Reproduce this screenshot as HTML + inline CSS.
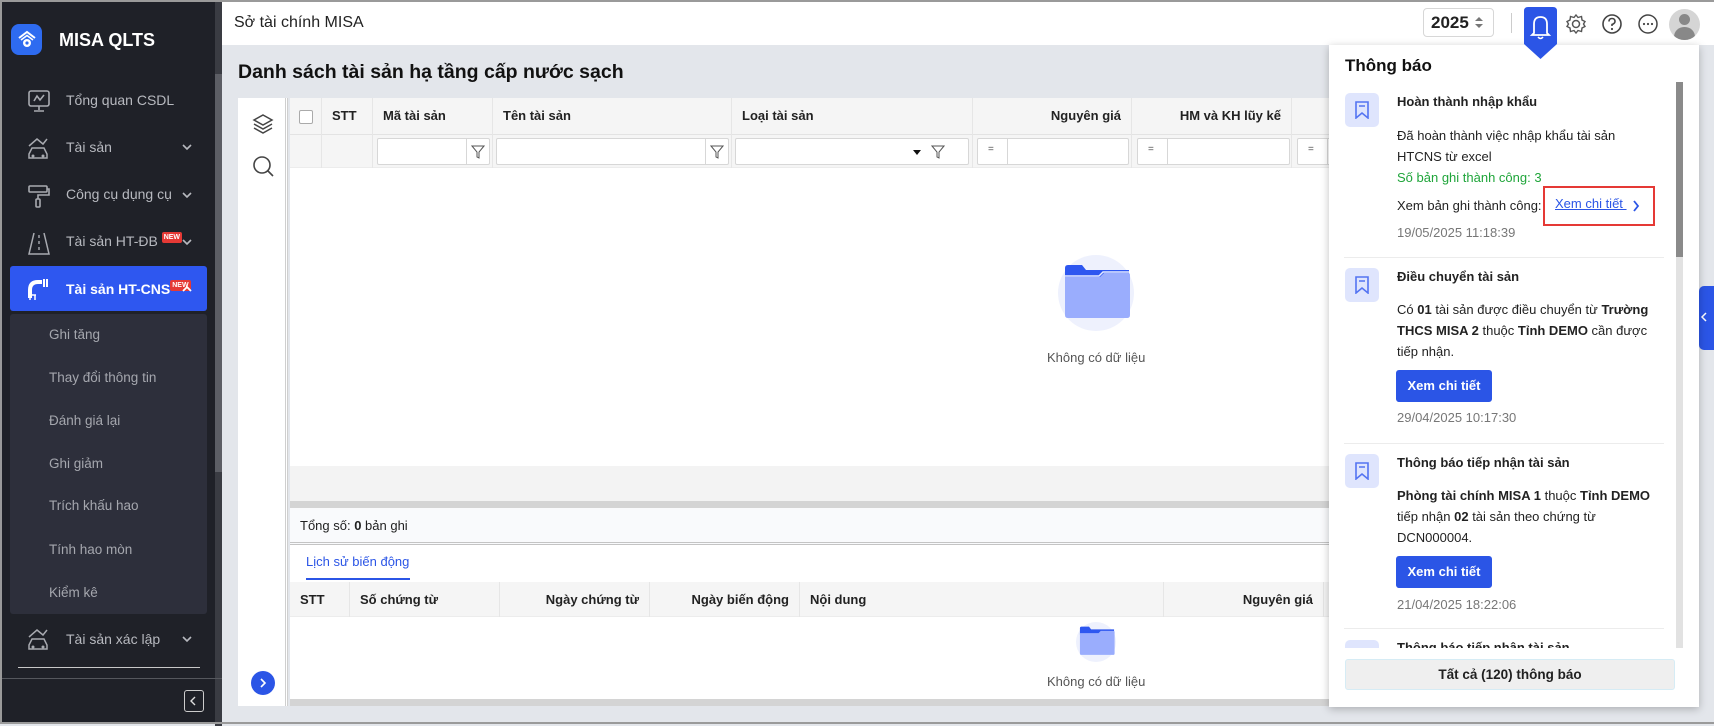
<!DOCTYPE html>
<html><head><meta charset="utf-8"><style>
*{box-sizing:border-box;margin:0;padding:0}
body{width:1714px;height:724px;overflow:hidden;position:relative;font-family:"Liberation Sans",sans-serif;font-size:13px;color:#212121;background:#e3e6eb}
.a{position:absolute}
.sb{left:0;top:0;width:222px;height:724px;background:#1f2128;border-top:2px solid #9a9a9a;border-left:2px solid #9a9a9a}
.mi{position:absolute;left:64px;color:#b7b9bf;font-size:14px;line-height:18px}
.ic{position:absolute;left:24px;width:26px;height:26px}
.chev{position:absolute;left:180px;width:10px;height:10px}
.sub{position:absolute;left:47px;color:#a5a7ae;font-size:13.5px;line-height:18px}
.new{display:inline-block;background:#e53935;color:#fff;font-size:7px;font-weight:bold;padding:1px 2px;border-radius:2px;vertical-align:top;line-height:9px}
.hd{left:222px;top:0;width:1492px;height:45px;background:#fff;border-top:2px solid #9a9a9a}
.th{position:absolute;top:0;height:36px;line-height:36px;font-weight:bold;font-size:13px;border-right:1px solid #e6e6e6;padding:0 10px;color:#222}
.fin{position:absolute;top:4px;height:27px;border:1px solid #d7d7d7;background:#fff;border-radius:2px}
.nt{position:absolute;left:1397px;font-size:13px;line-height:21px;color:#222;width:260px}
.ib{position:absolute;left:1345px;width:34px;height:34px;background:#dfe5fd;border-radius:5px}
.btn{position:absolute;left:1396px;width:96px;height:32px;background:#2b55e6;color:#fff;font-weight:bold;border-radius:3px;text-align:center;line-height:32px;font-size:13px}
.dt{position:absolute;left:1397px;color:#777;font-size:13px}
.sep{position:absolute;left:1344px;width:320px;height:1px;background:#ececec}
</style></head><body>

<!-- sidebar -->
<div class="a sb">
  <div class="a" style="left:9px;top:22px;width:31px;height:31px;background:#2e6bf0;border-radius:8px"></div>
  <svg class="a" style="left:14px;top:26px" width="22" height="22" viewBox="0 0 22 22"><path d="M3 10 L11 4 L19 10" stroke="#fff" stroke-width="2" fill="none"/><path d="M5 12 L11 7.5 L17 12" stroke="#fff" stroke-width="1.6" fill="none"/><circle cx="11" cy="15" r="4" fill="#fff"/><circle cx="11" cy="15" r="1.6" fill="#2e6bf0"/></svg>
  <div class="a" style="left:57px;top:28px;color:#fff;font-weight:bold;font-size:18px">MISA QLTS</div>
  <div class="a" style="left:213px;top:0;width:7px;height:724px;background:#3a3c43"></div>
  <div class="a" style="left:213px;top:72px;width:7px;height:398px;background:#5c5e65"></div>

  <svg class="ic" style="top:86px" viewBox="0 0 26 26"><rect x="3" y="3" width="20" height="15" rx="2" fill="none" stroke="#a8aab0" stroke-width="1.6"/><path d="M8 13 L11 8 L14 12 L18 7" stroke="#a8aab0" stroke-width="1.6" fill="none"/><path d="M13 18v4M8 23h10" stroke="#a8aab0" stroke-width="1.6"/></svg>
  <div class="mi" style="top:89px">Tổng quan CSDL</div>
  <svg class="ic" style="top:134px" viewBox="0 0 26 26"><path d="M3 10 L11 3 L17 8 L21 3" stroke="#a8aab0" stroke-width="1.5" fill="none"/><path d="M3 18 L6 12 H18 L21 18 V22 H3Z" stroke="#a8aab0" stroke-width="1.5" fill="none"/><circle cx="7" cy="20" r="1.5" fill="#a8aab0"/><circle cx="17" cy="20" r="1.5" fill="#a8aab0"/></svg>
  <div class="mi" style="top:136px">Tài sản</div>
  <svg class="chev" style="top:140px" viewBox="0 0 10 10"><path d="M1 3 L5 7 L9 3" stroke="#b7b9bf" stroke-width="1.6" fill="none"/></svg>
  <svg class="ic" style="top:181px" viewBox="0 0 26 26"><rect x="3" y="3" width="18" height="6" rx="1" fill="none" stroke="#a8aab0" stroke-width="1.6"/><path d="M21 6h2v6H12v4" stroke="#a8aab0" stroke-width="1.6" fill="none"/><rect x="10" y="16" width="4" height="8" rx="1" fill="none" stroke="#a8aab0" stroke-width="1.6"/></svg>
  <div class="mi" style="top:183px">Công cụ dụng cụ</div>
  <svg class="chev" style="top:188px" viewBox="0 0 10 10"><path d="M1 3 L5 7 L9 3" stroke="#b7b9bf" stroke-width="1.6" fill="none"/></svg>
  <svg class="ic" style="top:228px" viewBox="0 0 26 26"><path d="M8 3 L3 24 H23 L18 3" stroke="#a8aab0" stroke-width="1.5" fill="none"/><path d="M13 5v3M13 11v3M13 17v3" stroke="#a8aab0" stroke-width="1.4"/></svg>
  <div class="mi" style="top:230px">Tài sản HT-ĐB <span class="new">NEW</span></div>
  <svg class="chev" style="top:235px" viewBox="0 0 10 10"><path d="M1 3 L5 7 L9 3" stroke="#b7b9bf" stroke-width="1.6" fill="none"/></svg>

  <div class="a" style="left:8px;top:264px;width:197px;height:45px;background:#2e57f0;border-radius:3px"></div>
  <svg class="ic" style="top:274px" viewBox="0 0 26 26"><path d="M4 22 V14 Q4 6 12 6 H16" stroke="#fff" stroke-width="4" fill="none"/><path d="M18 3v8M21 3v8" stroke="#fff" stroke-width="2"/><path d="M3 19h7M4 19v5M9 19v5" stroke="#fff" stroke-width="1.5"/></svg>
  <div class="mi" style="top:278px;color:#fff;font-weight:bold;font-size:14px">Tài sản HT-CNS<span class="new">NEW</span></div>
  <svg class="chev" style="top:282px" viewBox="0 0 10 10"><path d="M1 7 L5 3 L9 7" stroke="#fff" stroke-width="1.8" fill="none"/></svg>

  <div class="a" style="left:8px;top:312px;width:197px;height:300px;background:#2d2f3b;border-radius:3px"></div>
  <div class="sub" style="top:324px">Ghi tăng</div>
  <div class="sub" style="top:367px">Thay đổi thông tin</div>
  <div class="sub" style="top:410px">Đánh giá lại</div>
  <div class="sub" style="top:453px">Ghi giảm</div>
  <div class="sub" style="top:495px">Trích khấu hao</div>
  <div class="sub" style="top:539px">Tính hao mòn</div>
  <div class="sub" style="top:582px">Kiểm kê</div>

  <svg class="ic" style="top:625px" viewBox="0 0 26 26"><path d="M3 10 L11 3 L17 8 L21 3" stroke="#a8aab0" stroke-width="1.5" fill="none"/><path d="M3 18 L6 12 H18 L21 18 V22 H3Z" stroke="#a8aab0" stroke-width="1.5" fill="none"/><circle cx="7" cy="20" r="1.5" fill="#a8aab0"/><circle cx="17" cy="20" r="1.5" fill="#a8aab0"/></svg>
  <div class="mi" style="top:628px">Tài sản xác lập</div>
  <svg class="chev" style="top:632px" viewBox="0 0 10 10"><path d="M1 3 L5 7 L9 3" stroke="#b7b9bf" stroke-width="1.6" fill="none"/></svg>
  <div class="a" style="left:16px;top:665px;width:182px;height:1px;background:#c8c8c8"></div>
  <div class="a" style="left:0;top:676px;width:220px;height:1px;background:#55575d"></div>
  <div class="a" style="left:182px;top:688px;width:20px;height:22px;border:1.5px solid #ccc;border-radius:3px"></div>
  <svg class="a" style="left:187px;top:694px" width="10" height="10" viewBox="0 0 10 10"><path d="M6 1 L2 5 L6 9" stroke="#ddd" stroke-width="1.4" fill="none"/></svg>
</div>

<!-- header -->
<div class="a hd">
  <div class="a" style="left:12px;top:12px;font-size:16px;color:#222">Sở tài chính MISA</div>
</div>
<div class="a" style="left:0;top:722px;width:1714px;height:2px;background:#9a9a9a"></div>

<!-- main -->
<div class="a" style="left:238px;top:61px;font-size:19.5px;font-weight:bold;color:#111">Danh sách tài sản hạ tầng cấp nước sạch</div>
<div class="a" style="left:238px;top:98px;width:50px;height:608px;background:#fff;border-right:3px double #cfcfcf"></div>
<svg class="a" style="left:251px;top:112px" width="24" height="24" viewBox="0 0 24 24"><path d="M12 3 L21 8 L12 13 L3 8Z" fill="none" stroke="#444" stroke-width="1.5"/><path d="M3 12 L12 17 L21 12M3 16 L12 21 L21 16" fill="none" stroke="#444" stroke-width="1.5"/></svg>
<svg class="a" style="left:251px;top:154px" width="24" height="24" viewBox="0 0 24 24"><circle cx="11" cy="11" r="8" fill="none" stroke="#444" stroke-width="1.6"/><path d="M17 17 L22 22" stroke="#444" stroke-width="1.6"/></svg>
<div class="a" style="left:251px;top:671px;width:24px;height:24px;border-radius:50%;background:#2b55e6"></div>
<svg class="a" style="left:258px;top:678px" width="10" height="10" viewBox="0 0 10 10"><path d="M3 1 L7 5 L3 9" stroke="#fff" stroke-width="1.6" fill="none"/></svg>

<div class="a" style="left:290px;top:98px;width:1408px;height:608px;background:#fff;overflow:hidden">
  <div class="a" style="left:0;top:0;width:1408px;height:70px;background:#f5f5f5;border-bottom:1px solid #ececec"></div>
  <div class="a" style="left:0;top:36px;width:1408px;height:1px;background:#e3e3e3"></div>
  <div class="th" style="left:0;width:32px;height:70px"></div>
  <div class="a" style="left:9px;top:12px;width:14px;height:14px;border:1px solid #aaa;border-radius:2px;background:#fff"></div>
  <div class="th" style="left:32px;width:51px;height:70px">STT</div>
  <div class="th" style="left:83px;width:120px;height:70px">Mã tài sản</div>
  <div class="th" style="left:203px;width:239px;height:70px">Tên tài sản</div>
  <div class="th" style="left:442px;width:241px;height:70px">Loại tài sản</div>
  <div class="th" style="left:683px;width:159px;height:70px;text-align:right">Nguyên giá</div>
  <div class="th" style="left:842px;width:160px;height:70px;text-align:right">HM và KH lũy kế</div>
  <div class="th" style="left:1002px;width:406px;height:70px"></div>
  <div class="a" style="top:36px;left:0;width:1408px;height:34px">
    <div class="fin" style="left:87px;width:113px"></div><div class="a" style="left:176px;top:4px;width:1px;height:27px;background:#d7d7d7"></div>
    <svg class="a" style="left:181px;top:11px" width="14" height="14" viewBox="0 0 14 14"><path d="M1 1 H13 L8 7 V13 L6 12 V7Z" fill="none" stroke="#555" stroke-width="1"/></svg>
    <div class="fin" style="left:206px;width:233px"></div><div class="a" style="left:415px;top:4px;width:1px;height:27px;background:#d7d7d7"></div>
    <svg class="a" style="left:420px;top:11px" width="14" height="14" viewBox="0 0 14 14"><path d="M1 1 H13 L8 7 V13 L6 12 V7Z" fill="none" stroke="#555" stroke-width="1"/></svg>
    <div class="fin" style="left:445px;width:234px"></div>
    <svg class="a" style="left:623px;top:16px" width="8" height="5" viewBox="0 0 8 5"><path d="M0 0 H8 L4 5Z" fill="#111"/></svg>
    <svg class="a" style="left:641px;top:11px" width="14" height="14" viewBox="0 0 14 14"><path d="M1 1 H13 L8 7 V13 L6 12 V7Z" fill="none" stroke="#555" stroke-width="1"/></svg>
    <div class="fin" style="left:687px;width:152px"></div><div class="a" style="left:717px;top:4px;width:1px;height:27px;background:#d7d7d7"></div><div class="a" style="left:698px;top:10px;font-size:10px;color:#555">=</div>
    <div class="fin" style="left:847px;width:153px"></div><div class="a" style="left:877px;top:4px;width:1px;height:27px;background:#d7d7d7"></div><div class="a" style="left:858px;top:10px;font-size:10px;color:#555">=</div>
    <div class="fin" style="left:1007px;width:160px"></div><div class="a" style="left:1037px;top:4px;width:1px;height:27px;background:#d7d7d7"></div><div class="a" style="left:1018px;top:10px;font-size:10px;color:#555">=</div>
  </div>
  <div class="a" style="left:768px;top:157px;width:76px;height:76px;border-radius:50%;background:#eef1fd"></div>
  <svg class="a" style="left:772px;top:162px" width="70" height="60" viewBox="0 0 70 60"><path d="M3 8 Q3 5 6 5 H20 L24 10 H67 V20 H3Z" fill="#2e57f0"/><path d="M3 17 H38 L42 13 H66 Q68 13 68 15 V55 Q68 58 65 58 H6 Q3 58 3 55Z" fill="#9aadfd"/><path d="M3 16 H37 L41 12 H67" stroke="#e6ebff" stroke-width="1.5" fill="none"/></svg>
  <div class="a" style="left:757px;top:252px;color:#555;font-size:13px">Không có dữ liệu</div>

  <div class="a" style="left:0;top:368px;width:1408px;height:35px;background:#f3f3f3"></div>
  <div class="a" style="left:0;top:403px;width:1408px;height:7px;background:#d4d4d4"></div>
  <div class="a" style="left:0;top:410px;width:1408px;height:37px;background:#f9fafc;border-bottom:3px double #c4c4c4"></div>
  <div class="a" style="left:10px;top:420px">Tổng số: <b>0</b> bản ghi</div>
  <div class="a" style="left:16px;top:456px;color:#2b55e6;font-size:13px">Lịch sử biến động</div>
  <div class="a" style="left:16px;top:480px;width:104px;height:2px;background:#2b55e6"></div>
  <div class="a" style="left:0;top:484px;width:1408px;height:35px;background:#f5f5f5;border-bottom:1px solid #ececec"></div>
  <div class="th" style="top:484px;left:0;width:60px;height:35px;line-height:35px">STT</div>
  <div class="th" style="top:484px;left:60px;width:150px;height:35px;line-height:35px">Số chứng từ</div>
  <div class="th" style="top:484px;left:210px;width:150px;height:35px;line-height:35px;text-align:right">Ngày chứng từ</div>
  <div class="th" style="top:484px;left:360px;width:150px;height:35px;line-height:35px;text-align:right">Ngày biến động</div>
  <div class="th" style="top:484px;left:510px;width:364px;height:35px;line-height:35px">Nội dung</div>
  <div class="th" style="top:484px;left:874px;width:160px;height:35px;line-height:35px;text-align:right">Nguyên giá</div>
  <div class="a" style="left:786px;top:524px;width:40px;height:40px;border-radius:50%;background:#eef1fd"></div>
  <svg class="a" style="left:788px;top:526px" width="38" height="32" viewBox="0 0 70 60"><path d="M3 8 Q3 5 6 5 H20 L24 10 H67 V20 H3Z" fill="#2e57f0"/><path d="M3 17 H38 L42 13 H66 Q68 13 68 15 V55 Q68 58 65 58 H6 Q3 58 3 55Z" fill="#9aadfd"/></svg>
  <div class="a" style="left:757px;top:576px;color:#555;font-size:13px">Không có dữ liệu</div>
  <div class="a" style="left:0;top:601px;width:1408px;height:7px;background:#d4d4d4"></div>
</div>

<!-- header right -->
<div class="a" style="left:1423px;top:8px;width:71px;height:29px;border:1px solid #d7d7d7;border-radius:4px;background:#fff"></div>
<div class="a" style="left:1431px;top:13px;font-weight:bold;font-size:17px">2025</div>
<svg class="a" style="left:1474px;top:15px" width="10" height="15" viewBox="0 0 10 15"><path d="M1 6 L5 2 L9 6Z M1 9 L5 13 L9 9Z" fill="#777"/></svg>
<div class="a" style="left:1511px;top:13px;width:1px;height:20px;background:#ccc"></div>
<svg class="a" style="left:1565px;top:13px" width="22" height="22" viewBox="0 0 22 22"><circle cx="11" cy="11" r="3.5" fill="none" stroke="#555" stroke-width="1.5"/><path d="M11 2 L13 4.5 L16.5 3.5 L17 7 L20 8.5 L18.5 11 L20 13.5 L17 15 L16.5 18.5 L13 17.5 L11 20 L9 17.5 L5.5 18.5 L5 15 L2 13.5 L3.5 11 L2 8.5 L5 7 L5.5 3.5 L9 4.5Z" fill="none" stroke="#555" stroke-width="1.4"/></svg>
<svg class="a" style="left:1601px;top:13px" width="22" height="22" viewBox="0 0 22 22"><circle cx="11" cy="11" r="9" fill="none" stroke="#444" stroke-width="1.6"/><path d="M8 8.5 Q8 5.5 11 5.5 Q14 5.5 14 8.5 Q14 10.5 11 11.5 V13" fill="none" stroke="#444" stroke-width="1.6"/><circle cx="11" cy="16" r="1.1" fill="#444"/></svg>
<svg class="a" style="left:1637px;top:13px" width="22" height="22" viewBox="0 0 22 22"><circle cx="11" cy="11" r="9" fill="none" stroke="#444" stroke-width="1.5"/><circle cx="7" cy="11" r="1.1" fill="#444"/><circle cx="11" cy="11" r="1.1" fill="#444"/><circle cx="15" cy="11" r="1.1" fill="#444"/></svg>
<div class="a" style="left:1669px;top:9px;width:31px;height:31px;border-radius:50%;background:#d5d5d5;overflow:hidden">
  <div class="a" style="left:10px;top:5px;width:11px;height:11px;border-radius:50%;background:#888"></div>
  <div class="a" style="left:5px;top:18px;width:21px;height:16px;border-radius:10px 10px 0 0;background:#888"></div>
</div>

<!-- right blue tab -->
<div class="a" style="left:1699px;top:286px;width:15px;height:64px;background:#2b55e6;border-radius:5px 0 0 5px"></div>
<svg class="a" style="left:1700px;top:312px" width="8" height="10" viewBox="0 0 8 10"><path d="M6 1 L2 5 L6 9" stroke="#fff" stroke-width="1.5" fill="none"/></svg>

<!-- notification panel -->
<div class="a" style="left:1329px;top:45px;width:370px;height:662px;background:#fff;box-shadow:0 2px 8px rgba(0,0,0,.25)"></div>
<svg class="a" style="left:1524px;top:7px" width="33" height="53" viewBox="0 0 33 53"><path d="M0 4 Q0 0 4 0 H29 Q33 0 33 4 V37 L16.5 52 L0 37Z" fill="#2b55e6"/><path d="M10 26 V17 Q10 10 16.5 10 Q23 10 23 17 V26 L25 28 H8Z" fill="none" stroke="#fff" stroke-width="1.8"/><path d="M14 30 Q16.5 33 19 30" stroke="#fff" stroke-width="1.6" fill="none"/></svg>
<div class="a" style="left:1345px;top:56px;font-weight:bold;font-size:17px;color:#111">Thông báo</div>
<div class="a" style="left:1676px;top:82px;width:7px;height:566px;background:#e2e2e2"></div>
<div class="a" style="left:1676px;top:82px;width:7px;height:175px;background:#8a8a8a"></div>

<div class="ib" style="top:93px"></div>
<svg class="a" style="left:1355px;top:101px" width="14" height="18" viewBox="0 0 14 18"><path d="M1 1 H13 V17 L7 12 L1 17Z M4 5 H10" fill="none" stroke="#5474f2" stroke-width="1.6"/></svg>
<div class="nt" style="top:91px;font-weight:bold">Hoàn thành nhập khẩu</div>
<div class="nt" style="top:125px">Đã hoàn thành việc nhập khẩu tài sản<br>HTCNS từ excel<br><span style="color:#1fa53a">Số bản ghi thành công: 3</span></div>
<div class="nt" style="top:195px">Xem bản ghi thành công:</div>
<div class="a" style="left:1543px;top:186px;width:112px;height:40px;border:2px solid #e53935"></div>
<div class="a" style="left:1555px;top:196px;color:#2b55e6;text-decoration:underline">Xem chi tiết&nbsp;</div>
<svg class="a" style="left:1632px;top:200px" width="8" height="12" viewBox="0 0 8 12"><path d="M2 1 L6 6 L2 11" stroke="#2b55e6" stroke-width="1.8" fill="none"/></svg>
<div class="dt" style="top:225px">19/05/2025 11:18:39</div>
<div class="sep" style="top:257px"></div>

<div class="ib" style="top:268px"></div>
<svg class="a" style="left:1355px;top:276px" width="14" height="18" viewBox="0 0 14 18"><path d="M1 1 H13 V17 L7 12 L1 17Z M4 5 H10" fill="none" stroke="#5474f2" stroke-width="1.6"/></svg>
<div class="nt" style="top:266px;font-weight:bold">Điều chuyển tài sản</div>
<div class="nt" style="top:299px">Có <b>01</b> tài sản được điều chuyển từ <b>Trường THCS MISA 2</b> thuộc <b>Tỉnh DEMO</b> cần được tiếp nhận.</div>
<div class="btn" style="top:370px">Xem chi tiết</div>
<div class="dt" style="top:410px">29/04/2025 10:17:30</div>
<div class="sep" style="top:443px"></div>

<div class="ib" style="top:454px"></div>
<svg class="a" style="left:1355px;top:462px" width="14" height="18" viewBox="0 0 14 18"><path d="M1 1 H13 V17 L7 12 L1 17Z M4 5 H10" fill="none" stroke="#5474f2" stroke-width="1.6"/></svg>
<div class="nt" style="top:452px;font-weight:bold">Thông báo tiếp nhận tài sản</div>
<div class="nt" style="top:485px"><b>Phòng tài chính MISA 1</b> thuộc <b>Tỉnh DEMO</b> tiếp nhận <b>02</b> tài sản theo chứng từ DCN000004.</div>
<div class="btn" style="top:556px">Xem chi tiết</div>
<div class="dt" style="top:597px">21/04/2025 18:22:06</div>
<div class="sep" style="top:628px"></div>
<div class="a" style="left:1340px;top:640px;width:330px;height:8px;overflow:hidden">
  <div class="a" style="left:5px;top:0;width:34px;height:20px;background:#dfe5fd;border-radius:5px"></div>
  <div class="a" style="left:57px;top:0;font-weight:bold">Thông báo tiếp nhận tài sản</div>
</div>
<div class="a" style="left:1345px;top:659px;width:330px;height:31px;background:#efefef;border:1px solid #d6ecf5;border-radius:3px;text-align:center;line-height:29px;font-weight:bold;font-size:13.5px">Tất cả (120) thông báo</div>
</body></html>
